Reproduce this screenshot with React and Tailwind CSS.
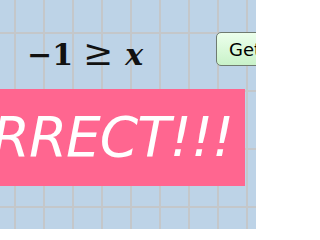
import React from "react";

// GeoGebra-style canvas: grid, a math expression, a button and the result banner
const App = () => {
  return (
    <div className="w-[256px] h-[229px] overflow-hidden bg-[#bdd3e7] bg-[linear-gradient(to_right,#c4c7ca_1.5px,transparent_1.5px),linear-gradient(to_bottom,#c4c7ca_1.5px,transparent_1.5px)] bg-size-[29px_58px] bg-position-[14px_32px] pt-[32px]">
      <div className="flex h-[57px] items-start">
        <div className="flex shrink-0 items-baseline pl-[27px] pt-[5px] text-[30px] leading-[32px] text-[#111] font-['DejaVu_Serif',serif]">
          <span className="font-bold">−1</span>
          <span className="ml-[10px] text-[36px] font-normal">≥</span>
          <span className="ml-[12px] font-bold italic">x</span>
        </div>
        <button className="ml-auto mr-[-120px] shrink-0 w-[160px] h-[34px] rounded-[5px] border border-[#6f7b70] bg-[linear-gradient(to_bottom,#ecffec,#c9f2c9)] pl-[12px] text-left whitespace-nowrap text-[18px] text-black font-['DejaVu_Sans',sans-serif]">
          Get new question
        </button>
      </div>
      <div className="ml-[-200px] flex h-[97px] w-[445px] items-center justify-end bg-[#ff6690] pr-[12px]">
        <span className="whitespace-nowrap text-[55px] leading-none italic tracking-[-1px] text-white font-['DejaVu_Sans',sans-serif]">
          CORRECT!!!
        </span>
      </div>
    </div>
  );
};

export default App;
